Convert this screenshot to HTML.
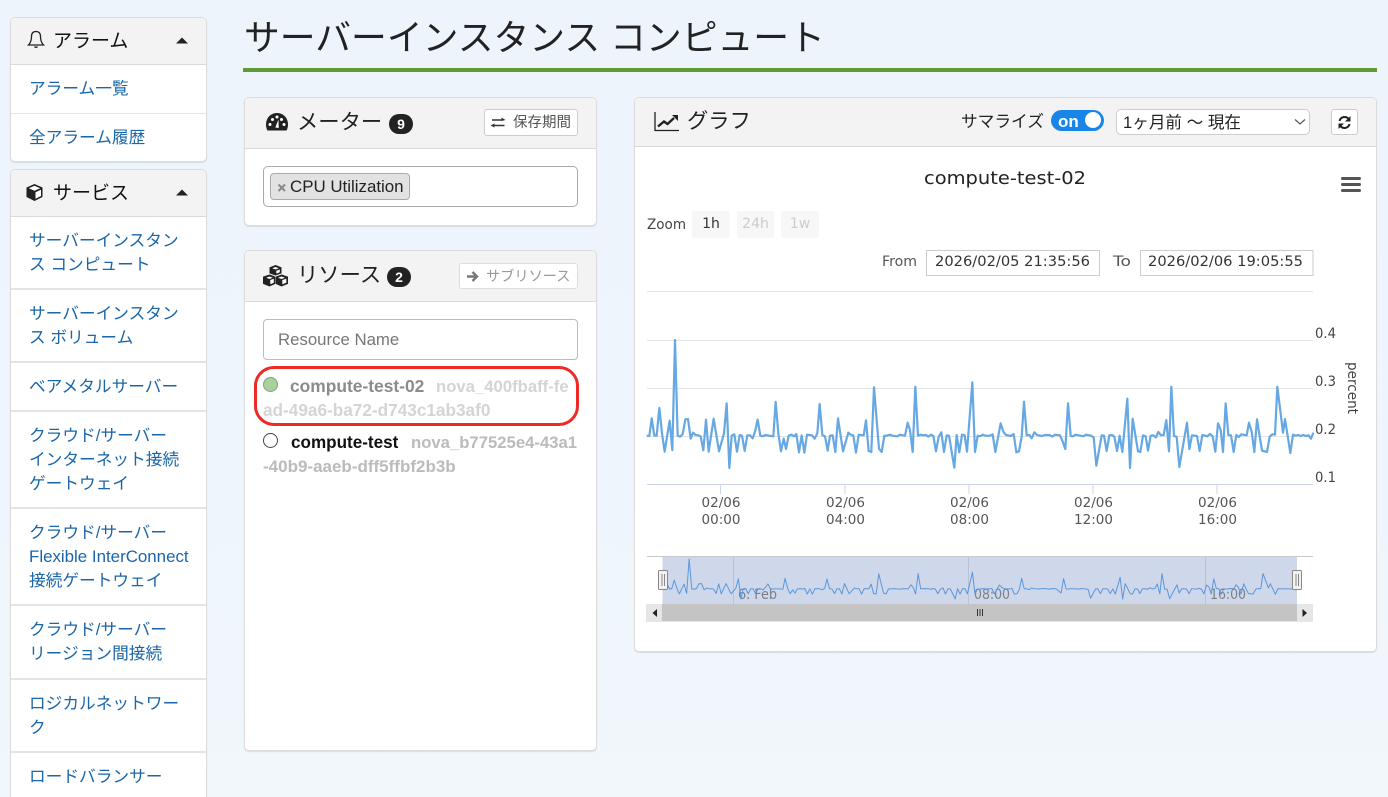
<!DOCTYPE html>
<html lang="ja"><head><meta charset="utf-8"><title>サーバーインスタンス コンピュート</title>
<style>
html,body{margin:0;padding:0;width:1388px;height:797px;overflow:hidden}
body{position:relative;background:linear-gradient(180deg,#edf4fc 0%,#eef5fc 60%,#f1f7fb 100%);font-family:"Liberation Sans","Noto Sans CJK JP",sans-serif;color:#111}
.a,.p,.h,.it,.t{position:absolute;box-sizing:border-box}
.p{background:#fff;border:1px solid #dcdcdc;border-radius:5px;box-shadow:0 1px 1px rgba(0,0,0,.1)}
.h{background:#f3f3f3;border-bottom:1px solid #dadada;border-radius:4px 4px 0 0;left:0;top:0}
.it{left:0;width:195px;border-bottom:2px solid #e4e4e4;padding:12px 0 0 18px;color:#1a66a8;font-size:16.7px;line-height:24px;white-space:nowrap}
.t{white-space:nowrap}
.btn{position:absolute;box-sizing:border-box;background:#fff;border:1px solid #ccc;border-radius:3px}
svg{position:absolute;overflow:visible}
.c{font-family:"DejaVu Sans",sans-serif}
</style></head><body>

<!-- sidebar panel 1 -->
<div class="p" style="left:10px;top:17px;width:197px;height:145px">
 <div class="h" style="width:195px;height:47px"></div>
 <div class="it" style="top:47px;height:49px;padding-top:12px;border-bottom-width:1px">アラーム一覧</div>
 <div class="it" style="top:96px;height:48px;border:0;padding-top:12px">全アラーム履歴</div>
</div>
<div class="t" style="left:53px;top:26px;font-size:19px;line-height:28px;margin-top:2px">アラーム</div>
<svg style="left:27px;top:30px" width="18" height="20" viewBox="0 0 18 20"><path d="M9 1.500C5.500 1.500 4.500 4 4.500 6.500C4.500 11 3.500 13 1.500 15H16.500C14.500 13 13.500 11 13.500 6.500C13.500 4 12.500 1.500 9 1.500Z" fill="none" stroke="#222" stroke-width="1.300"/><path d="M7 16.500C7 18.500 11 18.500 11 16.500Z" fill="#222"/></svg>
<svg style="left:176px;top:37px" width="12" height="7"><path d="M0 6.500L6 0.500L12 6.500Z" fill="#222"/></svg>

<!-- sidebar panel 2 -->
<div class="p" style="left:10px;top:169px;width:197px;height:640px">
 <div class="h" style="width:195px;height:47px"></div>
 <div class="it" style="top:47px;height:73px">サーバーインスタン<br>ス コンピュート</div>
 <div class="it" style="top:120px;height:73px">サーバーインスタン<br>ス ボリューム</div>
 <div class="it" style="top:193px;height:49px">ベアメタルサーバー</div>
 <div class="it" style="top:242px;height:97px">クラウド/サーバー<br>インターネット接続<br>ゲートウェイ</div>
 <div class="it" style="top:339px;height:97px">クラウド/サーバー<br><span style="font-size:16.9px">Flexible InterConnect</span><br>接続ゲートウェイ</div>
 <div class="it" style="top:436px;height:74px">クラウド/サーバー<br>リージョン間接続</div>
 <div class="it" style="top:510px;height:73px">ロジカルネットワー<br>ク</div>
 <div class="it" style="top:583px;height:49px">ロードバランサー</div>
</div>
<div class="t" style="left:53px;top:180px;font-size:19px;line-height:28px">サービス</div>
<svg style="left:25px;top:183px" width="19" height="19" viewBox="0 0 19 19"><path d="M9.500 1L17.500 4.500V14L9.500 18L1.500 14V4.500Z" fill="#222"/><path d="M9.500 2.700L15.200 5.200L9.500 7.700L3.800 5.200Z" fill="#fff"/><path d="M10.500 9.300L16 6.800V13L10.500 15.700Z" fill="#fff"/></svg>
<svg style="left:176px;top:189px" width="12" height="7"><path d="M0 6.500L6 0.500L12 6.500Z" fill="#222"/></svg>

<!-- title -->
<div class="t" style="left:244px;top:12px;font-size:35.8px;line-height:52px;color:#222">サーバーインスタンス コンピュート</div>
<div class="a" style="left:243px;top:68px;width:1134px;height:4px;background:#5f9a32"></div>

<!-- meter panel -->
<div class="p" style="left:244px;top:97px;width:353px;height:129px">
 <div class="h" style="width:351px;height:51px"></div>
 <div class="a" style="left:18px;top:68px;width:315px;height:41px;border:1px solid #aaa;border-radius:5px"></div>
 <div class="a" style="left:25px;top:75px;width:140px;height:27px;background:#e2e2e2;border:1px solid #aaa;border-radius:4px"></div>
</div>
<svg style="left:265px;top:112px" width="24" height="20" viewBox="0 0 24 20"><path d="M12 1C5.800 1 1 5.800 1 12.500C1 15 1.600 17 2.500 18.500H21.500C22.400 17 23 15 23 12.500C23 5.800 18.200 1 12 1Z" fill="#222"/><circle cx="5" cy="12.500" r="1.500" fill="#fff"/><circle cx="7.500" cy="7.500" r="1.500" fill="#fff"/><circle cx="12" cy="5" r="1.500" fill="#fff"/><circle cx="16.500" cy="7.500" r="1.500" fill="#fff"/><circle cx="19" cy="12.500" r="1.500" fill="#fff"/><path d="M10.300 15.500L13.500 7.500L13.700 16Z" fill="#fff"/></svg>
<div class="t" style="left:297px;top:107px;font-size:21.3px;line-height:30px;color:#222">メーター</div>
<div class="a" style="left:389px;top:114px;width:24px;height:20px;background:#222;border-radius:10px;color:#fff;font-size:14px;font-weight:bold;line-height:20px;text-align:center">9</div>
<div class="btn" style="left:484px;top:109px;width:94px;height:27px"></div>
<svg style="left:490px;top:116px" width="16" height="13" viewBox="0 0 16 13"><path d="M2 4H12M3.500 9.500H14.500" stroke="#333" stroke-width="1.500" fill="none"/><path d="M11.500 1.500L15.500 4L11.500 5ZM4.500 7.500L0.500 9.500L4.500 11.500Z" fill="#333"/></svg>
<div class="t" style="left:513px;top:112px;font-size:14.5px;line-height:21px;color:#555;margin-top:1px">保存期間</div>
<svg style="left:277px;top:183px" width="10" height="10"><path d="M1.500 1.500L8 8M8 1.500L1.500 8" stroke="#888" stroke-width="2"/></svg>
<div class="t" style="left:290px;top:175px;font-size:16.9px;line-height:23px;color:#222">CPU Utilization</div>

<!-- resource panel -->
<div class="p" style="left:244px;top:250px;width:353px;height:501px">
 <div class="h" style="width:351px;height:51px"></div>
 <div class="a" style="left:18px;top:68px;width:315px;height:41px;border:1px solid #bbb;border-radius:4px"></div>
</div>
<svg style="left:262px;top:264px" width="27" height="23" viewBox="0 0 27 23" fill="#222" stroke="#222"><path d="M13.500 1.500L19 3.700V9L13.500 11L8 9V3.700Z" stroke-width="1"/><path d="M7.500 11L12.800 13V19.500L7.500 22L1.500 19.500V13Z" stroke-width="1"/><path d="M19.500 11L25.500 13V19.500L19.500 22L14.200 19.500V13Z" stroke-width="1"/><path d="M13.500 3L16.800 4.200L13.500 5.500L10.200 4.200ZM7.500 12.500L10.800 13.700L7.500 15L4.200 13.700ZM19.500 12.500L23 13.700L19.500 15L16 13.700ZM14.300 6.800L17.800 5.500V8.300L14.300 9.600ZM8.300 16L11.800 14.700V18.800L8.300 20.300ZM20.300 16L24.300 14.700V18.800L20.300 20.300Z" fill="#fff" stroke="none"/></svg>
<div class="t" style="left:297px;top:260px;font-size:21.3px;line-height:30px;color:#222">リソース</div>
<div class="a" style="left:387px;top:267px;width:24px;height:20px;background:#222;border-radius:10px;color:#fff;font-size:14px;font-weight:bold;line-height:20px;text-align:center">2</div>
<div class="btn" style="left:459px;top:263px;width:119px;height:26px;border-color:#ddd"></div>
<svg style="left:466px;top:270px" width="13" height="13" viewBox="0 0 13 13"><path d="M1 6.500H10M6.500 2L11 6.500L6.500 11" stroke="#777" stroke-width="2.400" fill="none"/></svg>
<div class="t" style="left:486px;top:267px;font-size:14.2px;line-height:20px;color:#999">サブリソース</div>
<div class="t" style="left:278px;top:329px;font-size:16.8px;line-height:22px;color:#777">Resource Name</div>

<div class="a" style="left:263px;top:377px;width:15px;height:15px;border-radius:50%;background:#a8d29c;border:1.500px solid #8a9a88"></div>
<div class="t" style="left:290px;top:375px;font-size:17.4px;line-height:23px;font-weight:bold;color:#8b8b8b">compute-test-02</div>
<div class="t" style="left:436px;top:375px;font-size:16.7px;line-height:23px;font-weight:bold;color:#d4d4d4">nova_400fbaff-fe</div>
<div class="t" style="left:263px;top:399px;font-size:17.2px;line-height:23px;font-weight:bold;color:#d4d4d4">ad-49a6-ba72-d743c1ab3af0</div>
<div class="a" style="left:263px;top:433px;width:15px;height:15px;border-radius:50%;background:#fff;border:1.300px solid #444"></div>
<div class="t" style="left:291px;top:431px;font-size:17.1px;line-height:23px;font-weight:bold;color:#111">compute-test</div>
<div class="t" style="left:411px;top:431px;font-size:16.7px;line-height:23px;font-weight:bold;color:#bbb">nova_b77525e4-43a1</div>
<div class="t" style="left:263px;top:455px;font-size:17px;line-height:23px;font-weight:bold;color:#bbb">-40b9-aaeb-dff5ffbf2b3b</div>
<div class="a" style="left:254px;top:366px;width:325px;height:60px;border:3px solid #ee2a26;border-radius:20px"></div>

<!-- graph panel -->
<div class="p" style="left:634px;top:97px;width:743px;height:555px">
 <div class="h" style="width:741px;height:49px"></div>
</div>
<svg style="left:654px;top:111px" width="26" height="21" viewBox="0 0 26 21"><path d="M1 1V19.500H25" stroke="#222" stroke-width="1.300" fill="none"/><path d="M4 15.500L10 10.500L13.500 13L20 7" stroke="#222" stroke-width="2.400" fill="none"/><path d="M18 4H24V10Z" fill="#222"/></svg>
<div class="t" style="left:687px;top:106px;font-size:21.3px;line-height:30px;color:#222">グラフ</div>
<div class="t" style="left:961px;top:110px;font-size:16.7px;line-height:23px;color:#222">サマライズ</div>
<div class="a" style="left:1051px;top:110px;width:53px;height:21px;border-radius:11px;background:#1a85e8"></div>
<div class="t" style="left:1058px;top:111px;font-size:17px;line-height:21px;font-weight:bold;color:#fff">on</div>
<div class="a" style="left:1085px;top:112px;width:16px;height:16px;border-radius:50%;background:#fff"></div>
<div class="a" style="left:1116px;top:109px;width:194px;height:26px;background:#fff;border:1px solid #ccc;border-radius:5px"></div>
<div class="t" style="left:1123px;top:111px;font-size:16.6px;line-height:23px;color:#222">1ヶ月前 〜 現在</div>
<svg style="left:1294px;top:118px" width="12" height="8"><path d="M1 1.500L6 6L11 1.500" stroke="#555" stroke-width="1.200" fill="none"/></svg>
<div class="btn" style="left:1331px;top:109px;width:27px;height:26px"></div>
<svg style="left:1337px;top:115px" width="15" height="15" viewBox="0 0 15 15"><path d="M2.500 6A5.200 5.200 0 0 1 11.500 3.800M12.500 9A5.200 5.200 0 0 1 3.500 11.200" stroke="#222" stroke-width="2" fill="none"/><path d="M13.500 1V6.500H8ZM1.500 14V8.500H7Z" fill="#222"/></svg>

<!-- chart -->
<svg style="left:0;top:0" width="1388" height="797" viewBox="0 0 1388 797">
<defs>
<g id="ln" fill="none">
<polyline vector-effect="non-scaling-stroke" transform="translate(640,320) scale(.33333)" points="20,347 28,348 35,295 43,347 50,347 58,264 66,340 74,395 81,350 89,302 97,390 105,60 113,347 120,350 128,343 136,298 144,297 152,356 159,338 167,345 175,346 182,349 190,391 198,299 206,395 221,296 237,394 252,340 260,250 268,444 275,347 283,343 291,395 299,345 306,347 314,393 322,346 330,346 338,355 345,335 353,299 361,347 369,349 376,345 392,348 400,349 407,246 415,340 423,394 431,356 438,387 446,347 454,344 462,349 469,342 477,397 485,346 493,398 501,344 516,346 524,356 532,340 539,252 547,345 555,349 563,392 570,347 578,346 586,396 594,295 609,394 625,338 632,344 640,346 648,398 656,344 671,346 678,301 686,393 694,396 702,202 717,386 725,396 733,347 741,347 749,344 757,347 772,349 780,344 795,347 803,308 810,330 818,396 826,200 834,347 842,344 850,346 858,345 865,350 873,344 880,348 888,394 896,350 904,337 912,396 920,346 927,347 943,443 950,345 958,397 966,344 974,346 981,395 997,187 1005,396 1013,347 1020,349"/>
<polyline vector-effect="non-scaling-stroke" transform="translate(980,320) scale(.33333)" points="0,349 8,344 15,347 30,347 38,343 46,396 62,310 70,335 78,345 93,348 101,342 109,397 117,394 125,350 132,245 140,346 148,345 155,355 163,337 171,345 186,348 194,345 209,345 217,350 225,344 240,346 248,365 256,387 264,250 272,348 279,349 287,344 302,347 310,349 318,344 333,347 341,352 349,437 365,346 372,347 380,393 388,346 396,345 403,350 411,393 419,347 427,396 442,236 450,444 458,296 474,394 481,396 489,346 497,349 504,392 512,347 520,346 528,352 535,336 543,346 551,345 559,300 567,394 574,200 582,348 590,350 598,441 621,308 628,387 636,346 651,348 659,393 667,345 682,349 690,342 698,349 706,395 714,310 722,330 729,396 737,250 745,345 753,346 761,396 769,345 776,351 784,343 800,346 807,308 815,335 823,396 831,298 846,392 861,396 869,350 877,343 885,344 892,200 909,338 915,297 931,399 939,344 947,347 955,345 962,348 970,345 978,348 986,346 993,356 1000,338"/>
</g>
</defs>
<text class="c" x="924" y="184" font-size="18" fill="#222" textLength="162" lengthAdjust="spacingAndGlyphs">compute-test-02</text>
<path d="M1342.500 178.500H1359.500M1342.500 184.500H1359.500M1342.500 190.500H1359.500" stroke="#555" stroke-width="3" stroke-linecap="round"/>
<text class="c" x="647" y="229" font-size="14" fill="#444" textLength="39" lengthAdjust="spacingAndGlyphs">Zoom</text>
<rect x="692" y="211" width="38" height="27" rx="2" fill="#f7f7f7"/><rect x="737" y="211" width="37" height="27" rx="2" fill="#f7f7f7"/><rect x="781" y="211" width="38" height="27" rx="2" fill="#f7f7f7"/>
<text class="c" x="711" y="228" font-size="14" fill="#333" text-anchor="middle">1h</text>
<text class="c" x="755.500" y="228" font-size="14" fill="#ccc" text-anchor="middle">24h</text>
<text class="c" x="800" y="228" font-size="14" fill="#ccc" text-anchor="middle">1w</text>
<text class="c" x="882" y="266" font-size="14" fill="#555" textLength="35" lengthAdjust="spacingAndGlyphs">From</text>
<rect x="926.500" y="250.500" width="173" height="25" fill="#fff" stroke="#ccc"/>
<text class="c" x="935" y="266" font-size="14" fill="#333" textLength="155" lengthAdjust="spacingAndGlyphs">2026/02/05 21:35:56</text>
<text class="c" x="1113" y="266" font-size="14" fill="#555" textLength="18" lengthAdjust="spacingAndGlyphs">To</text>
<rect x="1140.500" y="250.500" width="172.500" height="25" fill="#fff" stroke="#ccc"/>
<text class="c" x="1148" y="266" font-size="14" fill="#333" textLength="155" lengthAdjust="spacingAndGlyphs">2026/02/06 19:05:55</text>

<path d="M647 291.500H1313M647 340.500H1313M647 388.500H1313M647 436.500H1313" stroke="#e3e3e3" stroke-width="1"/>
<path d="M647 484.500H1313M720.500 484V494M845 484V494M969 484V494M1093 484V494M1217 484V494" stroke="#ccd6eb" stroke-width="1"/>
<use href="#ln" stroke="#66a8e4" stroke-width="2.200" stroke-linejoin="round"/>
<g class="c" font-size="14" fill="#444">
<text x="1315" y="338" textLength="21" lengthAdjust="spacingAndGlyphs">0.4</text>
<text x="1315" y="386" textLength="21" lengthAdjust="spacingAndGlyphs">0.3</text>
<text x="1315" y="434" textLength="21" lengthAdjust="spacingAndGlyphs">0.2</text>
<text x="1315" y="482" textLength="21" lengthAdjust="spacingAndGlyphs">0.1</text>
</g>
<text class="c" transform="translate(1348,362) rotate(90)" font-size="14" fill="#444" textLength="52" lengthAdjust="spacingAndGlyphs">percent</text>
<g class="c" font-size="13.500" fill="#555" text-anchor="middle">
<text x="721" y="507">02/06</text><text x="721" y="524">00:00</text>
<text x="845.500" y="507">02/06</text><text x="845.500" y="524">04:00</text>
<text x="969.500" y="507">02/06</text><text x="969.500" y="524">08:00</text>
<text x="1093.500" y="507">02/06</text><text x="1093.500" y="524">12:00</text>
<text x="1217.500" y="507">02/06</text><text x="1217.500" y="524">16:00</text>
</g>

<!-- navigator -->
<rect x="662.500" y="557" width="634.500" height="47" fill="#cfd8ea"/>
<path d="M647 556.500H1313" stroke="#c8c8c8"/>
<path d="M733.500 557V604M968.500 557V604M1205.500 557V604" stroke="#b9c3d8"/>
<g class="c" font-size="14" fill="#7d7f86">
<text x="738" y="599" textLength="39" lengthAdjust="spacingAndGlyphs">6. Feb</text>
<text x="974" y="599" textLength="36" lengthAdjust="spacingAndGlyphs">08:00</text>
<text x="1210" y="599" textLength="36" lengthAdjust="spacingAndGlyphs">16:00</text>
</g>
<g transform="translate(662.500,589) scale(.9527,.3125) translate(-647,-436)"><use href="#ln" stroke="#5b96dc" stroke-width="1" stroke-linejoin="round"/></g>
<rect x="658.500" y="570.500" width="9" height="19" rx="1" fill="#f2f2f2" stroke="#888"/><path d="M662 574V586M664.500 574V586" stroke="#888"/>
<rect x="1292.500" y="570.500" width="9" height="19" rx="1" fill="#f2f2f2" stroke="#888"/><path d="M1296 574V586M1298.500 574V586" stroke="#888"/>
<rect x="646" y="604" width="667" height="18" fill="#e6e6e6"/>
<rect x="662" y="604" width="635" height="17" fill="#c4c4c4"/>
<path d="M977.500 609V616M980 609V616M982.500 609V616" stroke="#333"/>
<path d="M657 609V617L652.500 613ZM1302.500 609V617L1307 613Z" fill="#222"/>
</svg>
</body></html>
